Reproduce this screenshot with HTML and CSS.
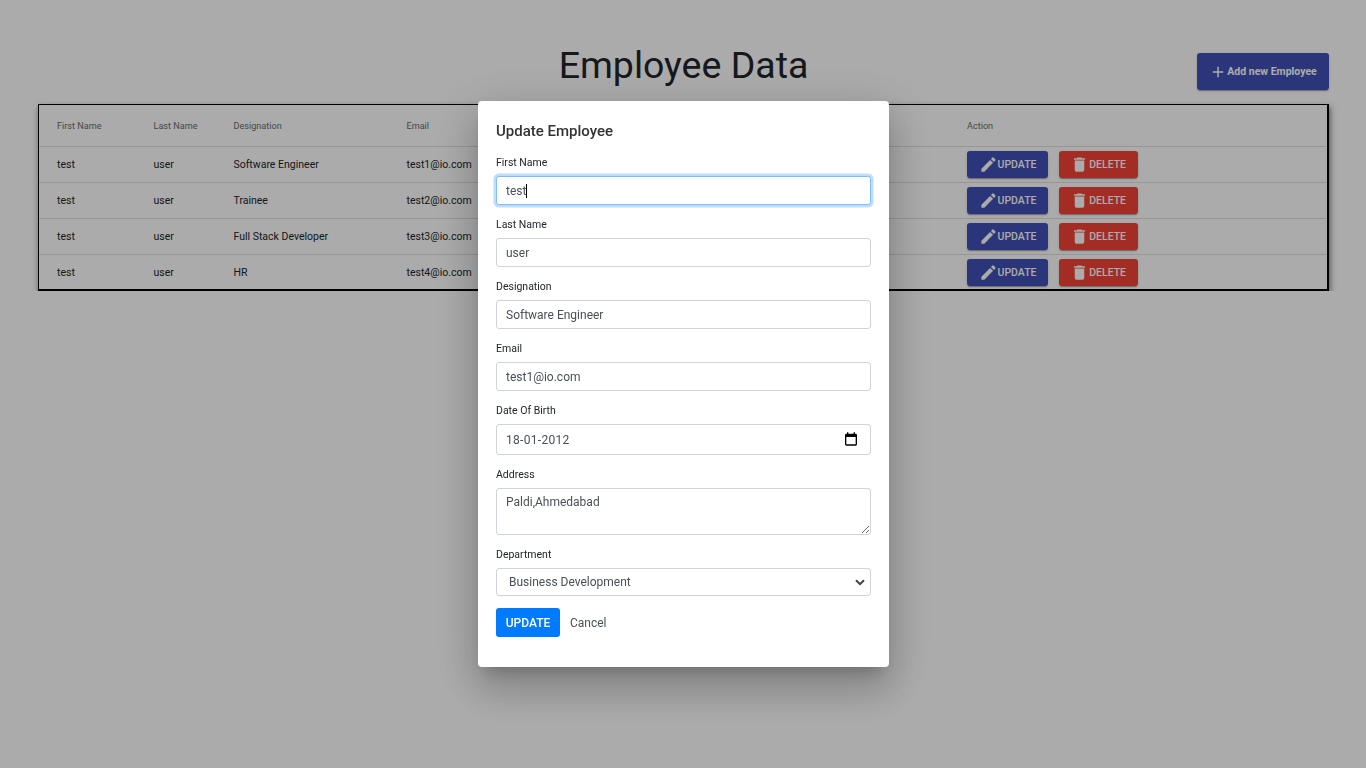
FILE: index.html
```html
<!DOCTYPE html>
<html lang="en">
<head>
<meta charset="UTF-8" />
<meta name="viewport" content="width=device-width, initial-scale=1" />
<title>Employee Data</title>
<link rel="stylesheet" href="styles.css">
</head>
<body>

<div class="page">
  <header class="top">
    <h1>Employee Data</h1>
    <button class="btn btn-add">
      <svg class="ico-add" viewBox="0 0 24 24"><path d="M19 13h-6v6h-2v-6H5v-2h6V5h2v6h6v2z"/></svg>
      Add new Employee
    </button>
  </header>

  <div class="table-wrap">
    <table class="emp-table">
      <colgroup>
        <col class="c-first"><col class="c-last"><col class="c-desig"><col class="c-email"><col>
      </colgroup>
      <thead>
        <tr><th>First Name</th><th>Last Name</th><th>Designation</th><th>Email</th><th>Action</th></tr>
      </thead>
      <tbody>
        <tr>
          <td>test</td><td>user</td><td>Software Engineer</td><td>test1@io.com</td>
          <td class="actions">
            <button class="btn btn-update"><svg viewBox="0 0 24 24"><path d="M3 17.25V21h3.75L17.81 9.94l-3.75-3.75L3 17.25zM20.71 7.04a1 1 0 0 0 0-1.41l-2.34-2.34a1 1 0 0 0-1.41 0l-1.83 1.83 3.75 3.75 1.83-1.83z"/></svg>Update</button>
            <button class="btn btn-delete"><svg viewBox="0 0 24 24"><path d="M6 19c0 1.1.9 2 2 2h8c1.1 0 2-.9 2-2V7H6v12zM19 4h-3.5l-1-1h-5l-1 1H5v2h14V4z"/></svg>Delete</button>
          </td>
        </tr>
        <tr>
          <td>test</td><td>user</td><td>Trainee</td><td>test2@io.com</td>
          <td class="actions">
            <button class="btn btn-update"><svg viewBox="0 0 24 24"><path d="M3 17.25V21h3.75L17.81 9.94l-3.75-3.75L3 17.25zM20.71 7.04a1 1 0 0 0 0-1.41l-2.34-2.34a1 1 0 0 0-1.41 0l-1.83 1.83 3.75 3.75 1.83-1.83z"/></svg>Update</button>
            <button class="btn btn-delete"><svg viewBox="0 0 24 24"><path d="M6 19c0 1.1.9 2 2 2h8c1.1 0 2-.9 2-2V7H6v12zM19 4h-3.5l-1-1h-5l-1 1H5v2h14V4z"/></svg>Delete</button>
          </td>
        </tr>
        <tr>
          <td>test</td><td>user</td><td>Full Stack Developer</td><td>test3@io.com</td>
          <td class="actions">
            <button class="btn btn-update"><svg viewBox="0 0 24 24"><path d="M3 17.25V21h3.75L17.81 9.94l-3.75-3.75L3 17.25zM20.71 7.04a1 1 0 0 0 0-1.41l-2.34-2.34a1 1 0 0 0-1.41 0l-1.83 1.83 3.75 3.75 1.83-1.83z"/></svg>Update</button>
            <button class="btn btn-delete"><svg viewBox="0 0 24 24"><path d="M6 19c0 1.1.9 2 2 2h8c1.1 0 2-.9 2-2V7H6v12zM19 4h-3.5l-1-1h-5l-1 1H5v2h14V4z"/></svg>Delete</button>
          </td>
        </tr>
        <tr>
          <td>test</td><td>user</td><td>HR</td><td>test4@io.com</td>
          <td class="actions">
            <button class="btn btn-update"><svg viewBox="0 0 24 24"><path d="M3 17.25V21h3.75L17.81 9.94l-3.75-3.75L3 17.25zM20.71 7.04a1 1 0 0 0 0-1.41l-2.34-2.34a1 1 0 0 0-1.41 0l-1.83 1.83 3.75 3.75 1.83-1.83z"/></svg>Update</button>
            <button class="btn btn-delete"><svg viewBox="0 0 24 24"><path d="M6 19c0 1.1.9 2 2 2h8c1.1 0 2-.9 2-2V7H6v12zM19 4h-3.5l-1-1h-5l-1 1H5v2h14V4z"/></svg>Delete</button>
          </td>
        </tr>
      </tbody>
    </table>
  </div>
</div>

<div class="backdrop">
  <form class="modal">
    <h2>Update Employee</h2>

    <label for="firstName">First Name</label>
    <div class="caret-field">
      <input class="field is-focused" type="text" id="firstName" value="test" />
      <span class="caret"></span>
    </div>

    <label for="lastName">Last Name</label>
    <input class="field" type="text" id="lastName" value="user" />

    <label for="designation">Designation</label>
    <input class="field" type="text" id="designation" value="Software Engineer" />

    <label for="email">Email</label>
    <input class="field" type="text" id="email" value="test1@io.com" />

    <label for="dob">Date Of Birth</label>
    <div class="field date-field">
      <input type="text" id="dob" value="18-01-2012" />
      <svg viewBox="0 0 24 24"><path d="M19 4h-1V2h-2v2H8V2H6v2H5c-1.1 0-2 .9-2 2v14c0 1.1.9 2 2 2h14c1.1 0 2-.9 2-2V6c0-1.1-.9-2-2-2zm0 16H5V9h14v11z"/></svg>
    </div>

    <label for="address">Address</label>
    <textarea class="field area" id="address">Paldi,Ahmedabad</textarea>

    <label for="department">Department</label>
    <select class="field pick" id="department">
      <option>Business Development</option>
    </select>

    <div class="modal-actions">
      <button type="button" class="btn-primary">UPDATE</button>
      <button type="button" class="btn-cancel">Cancel</button>
    </div>
  </form>
</div>

</body>
</html>
```

FILE: styles.css
```css
body {
  margin: 0;
  background: #fff;
  font-family: Roboto, "Liberation Sans", sans-serif;
  color: #212529;
}
.page {
  padding: 0 37px 0 38px;
}
.top {
  display: grid;
  grid-template-columns: 1fr auto 1fr;
  align-items: end;
  height: 104px;
}
h1 {
  grid-column: 2;
  margin: 0 0 17px;
  font-size: 37.5px;
  font-weight: 400;
  line-height: 44px;
}
.btn {
  display: inline-flex;
  align-items: center;
  justify-content: center;
  border: none;
  border-radius: 3px;
  color: #fff;
  font-family: inherit;
  font-weight: 500;
  box-shadow: 0 2px 1px -1px rgba(0,0,0,.2), 0 1px 1px rgba(0,0,0,.14), 0 1px 3px rgba(0,0,0,.12);
}
.btn-add {
  grid-column: 3;
  justify-self: end;
  width: 132px;
  height: 37px;
  margin-bottom: 14px;
  padding: 0;
  background: #3f51b5;
  font-size: 10.5px;
  font-weight: 700;
}
.ico-add {
  width: 18px;
  height: 18px;
  fill: #fff;
  margin-top: 1px;
}
.table-wrap {
  border: solid #000;
  border-width: 1px 2px 2px 1px;
  height: 187px;
  box-sizing: border-box;
  box-shadow: 1px 3px 6px rgba(0,0,0,.55);
  background: #fff;
}
.emp-table {
  width: 100%;
  border-collapse: collapse;
  table-layout: fixed;
  font-size: 10.5px;
}
.c-first { width: 114.5px; }
.c-last { width: 80px; }
.c-desig { width: 173px; }
.c-email { width: 560.5px; }
th, td {
  text-align: left;
  padding: 0;
  border-bottom: 1px solid #e0e0e0;
}
th:first-child, td:first-child {
  padding-left: 18px;
}
th {
  height: 41px;
  font-size: 9.1px;
  font-weight: 400;
  color: #6b6b6b;
}
td {
  height: 35px;
}
tbody tr:last-child td {
  border-bottom: none;
}
.actions .btn {
  height: 27px;
  font-size: 10.5px;
  text-transform: uppercase;
  padding: 0;
  vertical-align: middle;
}
.actions svg {
  width: 19px;
  height: 19px;
  fill: #fff;
}
.btn-update {
  width: 81px;
  background: #3f51b5;
  margin-right: 8px;
}
.btn-delete {
  width: 79px;
  background: #f44336;
}

.backdrop {
  position: fixed;
  inset: 0;
  background: rgba(0, 0, 0, .33);
}
.modal {
  position: absolute;
  left: 478px;
  top: 101px;
  width: 411px;
  height: 566px;
  box-sizing: border-box;
  padding: 22px 18px 0;
  background: #fff;
  border-radius: 4px;
  box-shadow: 0 11px 15px -7px rgba(0,0,0,.2), 0 24px 38px 3px rgba(0,0,0,.14), 0 9px 46px 8px rgba(0,0,0,.12);
}
h2 {
  margin: 0 0 16px;
  font-size: 15px;
  font-weight: 500;
  line-height: 17px;
  color: #333;
}
label {
  display: block;
  font-size: 10.5px;
  line-height: 13px;
  margin-bottom: 7px;
  color: #212529;
}
.field {
  display: block;
  width: 100%;
  height: 29px;
  box-sizing: border-box;
  margin-bottom: 13px;
  padding: 0 9px;
  border: 1px solid #ced4da;
  border-radius: 3px;
  background: #fff;
  color: #495057;
  font-family: inherit;
  font-size: 12px;
}
.is-focused {
  border-color: #80bdff;
  outline: none;
  box-shadow: 0 0 0 2.5px rgba(0, 123, 255, .25);
}
.caret-field {
  position: relative;
}
.caret {
  position: absolute;
  left: 30px;
  top: 8px;
  width: 1px;
  height: 14px;
  background: #000;
}
.date-field {
  display: flex;
  align-items: center;
  height: 31px;
}
.date-field input {
  flex: 1;
  min-width: 0;
  border: none;
  outline: none;
  padding: 0;
  color: inherit;
  font: inherit;
  letter-spacing: .3px;
}
.date-field svg {
  width: 16px;
  height: 16px;
  fill: #000;
  margin-right: 2px;
  margin-top: -2px;
}
.area {
  height: 47px;
  padding: 6px 9px;
  resize: vertical;
}
.pick {
  height: 28px;
  padding: 0 12px;
  margin-bottom: 12px;
  appearance: none;
  background: #fff url("data:image/svg+xml,%3Csvg xmlns='http://www.w3.org/2000/svg' width='10' height='7' viewBox='0 0 10 7'%3E%3Cpath d='M1 1.2l4 4 4-4' fill='none' stroke='%23444' stroke-width='2'/%3E%3C/svg%3E") no-repeat right 5px center;
}
.modal-actions {
  display: flex;
  align-items: center;
  gap: 10px;
}
.btn-primary {
  width: 64px;
  height: 29px;
  padding: 0;
  border: none;
  border-radius: 3px;
  background: #007bff;
  color: #fff;
  font-family: inherit;
  font-size: 12px;
  font-weight: 500;
}
.btn-cancel {
  padding: 0;
  border: none;
  background: none;
  color: #495057;
  font-family: inherit;
  font-size: 12px;
}
```
